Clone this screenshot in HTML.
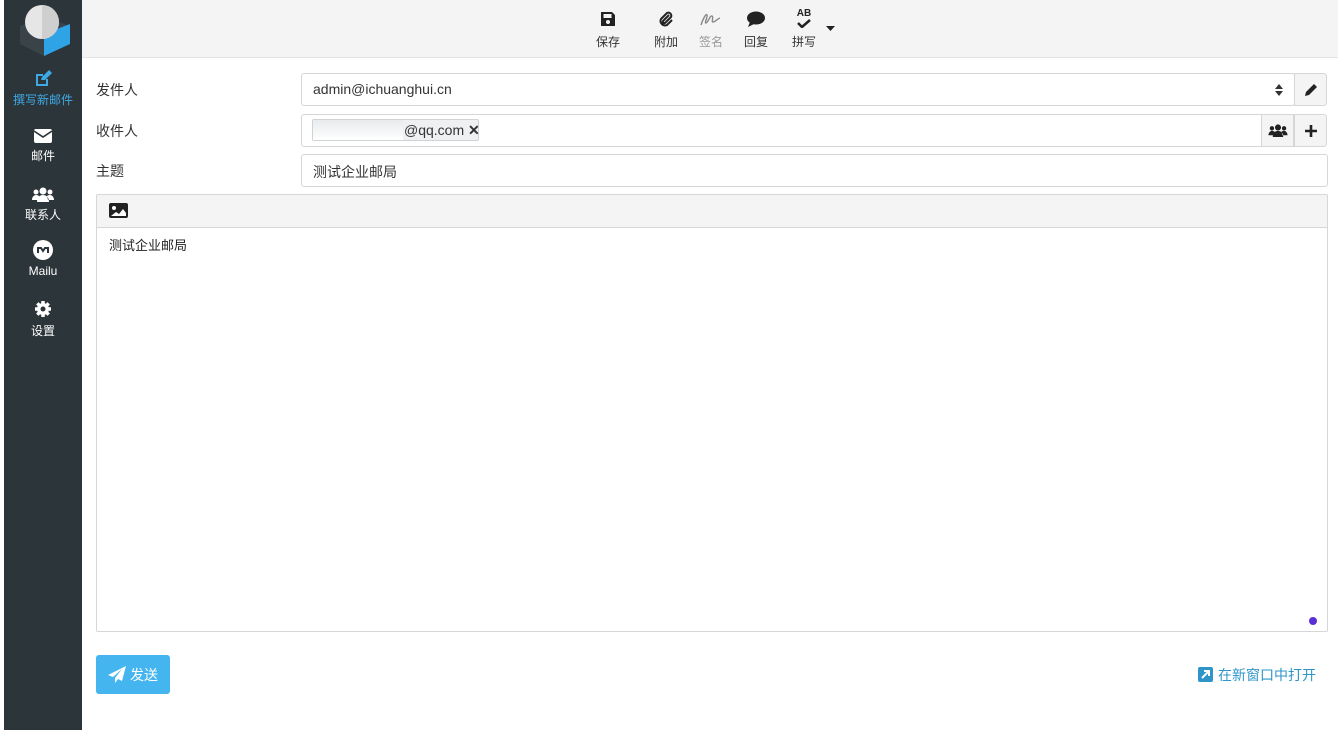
<!DOCTYPE html>
<html><head><meta charset="utf-8"><style>
*{box-sizing:border-box;margin:0;padding:0}
body{width:1338px;height:730px;background:#fff;font-family:"Liberation Sans","Noto Sans CJK SC",sans-serif;font-size:14px;color:#333;position:relative;overflow:hidden}
.abs{position:absolute}
#side{left:4px;top:0;width:78px;height:730px;background:#2c3539}
.nav{position:absolute;left:0;width:78px;text-align:center;color:#fff;font-size:12px}
.nav svg{display:block;margin:0 auto 4px}
#top{left:82px;top:0;width:1256px;height:58px;background:#f4f4f4;border-bottom:1px solid #e3e3e3}
.tb{position:absolute;top:11px;text-align:center;font-size:12px;color:#333}
.tb svg{display:block;margin:0 auto 6px}
.lbl{position:absolute;left:96px;font-size:14px;color:#333}
.inp{position:absolute;left:301px;width:1027px;height:33px;border:1px solid #d6d6d6;border-radius:3px;font-size:14px;padding:7px 11px}
.btnr{position:absolute;width:33px;height:33px;border:1px solid #d6d6d6;background:#f4f4f4;display:flex;align-items:center;justify-content:center}
</style></head><body>
<div id="side" class="abs">
  <svg class="abs" style="left:12px;top:4px" width="56" height="52" viewBox="0 0 56 52">
    <polygon points="4,22 28,12 54,22 54,40 28,52 4,40" fill="#3a4348"/>
    <polygon points="28,30 54,20 54,40 28,52" fill="#2ea3e6"/>
    <circle cx="26" cy="18" r="17" fill="#e6e6e6"/>
    <path d="M26 1 A17 17 0 0 1 26 35 Z" fill="#cfcfcf"/>
  </svg>
  <div class="nav" style="top:70px;color:#3fa9e6">
    <svg width="18" height="17" viewBox="0 0 18 17"><path d="M2 4h7v2H4v8h8V9h2v7H2z" fill="#3fa9e6"/><path d="M7 10l1-3 7-7 3 3-7 7z" fill="#3fa9e6"/></svg>撰写新邮件</div>
  <div class="nav" style="top:129px"><svg width="18" height="14" viewBox="0 0 18 14"><rect x="0" y="0" width="18" height="14" rx="2" fill="#fff"/><path d="M0 2l9 6 9-6" stroke="#2c3539" stroke-width="1.6" fill="none"/></svg>邮件</div>
  <div class="nav" style="top:187px"><svg width="22" height="15" viewBox="0 0 22 15"><circle cx="11" cy="4" r="3.5" fill="#fff"/><circle cx="4" cy="5" r="2.5" fill="#fff"/><circle cx="18" cy="5" r="2.5" fill="#fff"/><path d="M5 15c0-5 3-7 6-7s6 2 6 7z M0 13c0-3 2-5 4-5s3 1 3 1L6 13z M22 13c0-3-2-5-4-5s-3 1-3 1l1 4z" fill="#fff"/></svg>联系人</div>
  <div class="nav" style="top:240px"><svg width="20" height="20" viewBox="0 0 20 20"><circle cx="10" cy="10" r="10" fill="#fff"/><path d="M5 13V8h3l2 3 2-3h3v5" stroke="#2c3539" stroke-width="2" fill="none"/></svg>Mailu</div>
  <div class="nav" style="top:300px"><svg width="18" height="18" viewBox="0 0 18 18"><circle cx="9" cy="9" r="6" fill="#fff"/><g stroke="#fff" stroke-width="3.5"><path d="M9 1v16M1 9h16M3.3 3.3l11.4 11.4M14.7 3.3L3.3 14.7"/></g><circle cx="9" cy="9" r="2.5" fill="#2c3539"/></svg>设置</div>
</div>
<div id="top" class="abs"></div>
<div class="tb" style="left:594px;width:28px"><svg width="16" height="16" viewBox="0 0 16 16"><path d="M1 1h11l3 3v11H1z" fill="#222"/><rect x="3.5" y="3" width="8" height="4" fill="#f4f4f4"/><circle cx="8" cy="11" r="2" fill="#f4f4f4"/></svg>保存</div>
<div class="tb" style="left:652px;width:28px"><svg width="16" height="16" viewBox="0 0 16 16"><path d="M11 4L5 10a1.5 1.5 0 0 0 2 2l6-6a3 3 0 0 0-4-4L3 8a4.5 4.5 0 0 0 6 6l5-5" stroke="#222" stroke-width="2" fill="none"/></svg>附加</div>
<div class="tb" style="left:697px;width:28px;color:#999"><svg width="24" height="16" viewBox="0 0 24 16"><path d="M2 14c2-6 5-12 6-10s-3 8-1 8 4-8 6-7-1 6 1 6 4-3 7-4" stroke="#888" stroke-width="1.4" fill="none"/></svg>签名</div>
<div class="tb" style="left:742px;width:28px"><svg width="18" height="16" viewBox="0 0 18 16"><ellipse cx="9" cy="7" rx="9" ry="6.5" fill="#222"/><path d="M3 11l-2 5 6-3z" fill="#222"/></svg>回复</div>
<div class="tb" style="left:790px;width:28px;top:9px"><div style="font-size:10px;font-weight:bold;line-height:10px;color:#222">AB</div><svg width="14" height="9" viewBox="0 0 14 9" style="margin-bottom:5px"><path d="M1 4l4 4 8-7" stroke="#222" stroke-width="2.5" fill="none"/></svg>拼写</div>
<svg class="abs" style="left:826px;top:26px" width="9" height="5"><path d="M0 0h9L4.5 5z" fill="#222"/></svg>

<div class="lbl" style="top:80px">发件人</div>
<div class="lbl" style="top:121px">收件人</div>
<div class="lbl" style="top:161px">主题</div>
<div class="inp" style="top:73px;width:994px">admin@ichuanghui.cn</div>
<svg class="abs" style="left:1275px;top:84px" width="8" height="12"><path d="M0 5L4 0 8 5zM0 7l4 5 4-5z" fill="#333"/></svg>
<div class="btnr" style="left:1294px;top:73px;border-radius:0 3px 3px 0"><svg width="14" height="14" viewBox="0 0 14 14"><path d="M1 13l1-4 8-8 3 3-8 8z" fill="#222"/></svg></div>
<div class="inp" style="top:114px;width:962px"></div>
<div class="abs" style="left:312px;top:119px;width:167px;height:22px;background:#eef0f1;border:1px solid #d0d3d5;border-radius:2px;font-size:14px;padding:2px 0 0 91px;white-space:nowrap">@qq.com <b>✕</b></div>
<div class="abs" style="left:313px;top:120px;width:90px;height:20px;background:linear-gradient(#e8eaec,#fff)"></div>
<div class="btnr" style="left:1261px;top:114px"><svg width="20" height="13" viewBox="0 0 22 15"><circle cx="11" cy="4" r="3.5" fill="#222"/><circle cx="4" cy="5" r="2.5" fill="#222"/><circle cx="18" cy="5" r="2.5" fill="#222"/><path d="M5 15c0-5 3-7 6-7s6 2 6 7zM0 13c0-3 2-5 4-5s3 1 3 1L6 13zM22 13c0-3-2-5-4-5s-3 1-3 1l1 4z" fill="#222"/></svg></div>
<div class="btnr" style="left:1294px;top:114px;border-radius:0 3px 3px 0"><svg width="14" height="14"><path d="M7 1v12M1 7h12" stroke="#222" stroke-width="2.6"/></svg></div>
<div class="inp" style="top:154px">测试企业邮局</div>

<div class="abs" style="left:96px;top:194px;width:1232px;height:438px;border:1px solid #d6d6d6;border-radius:2px">
  <div style="height:33px;background:#f4f4f4;border-bottom:1px solid #d6d6d6;position:relative">
    <svg class="abs" style="left:12px;top:8px" width="19" height="15" viewBox="0 0 19 15"><rect width="19" height="15" rx="2" fill="#222"/><circle cx="5" cy="5" r="2" fill="#fff"/><path d="M2 13l5-4 3 2 4-5 3 4v3z" fill="#fff"/></svg>
  </div>
  <div style="font-size:13px;padding:7px 12px;color:#222">测试企业邮局</div>
  <div class="abs" style="right:10px;bottom:6px;width:8px;height:8px;border-radius:50%;background:#5b2fd6"></div>
</div>

<div class="abs" style="left:96px;top:655px;width:74px;height:39px;background:#44b5ee;border-radius:3px;color:#fff;font-size:14px;padding:10px 0 0 12px"><svg width="18" height="17" viewBox="0 0 18 17" style="vertical-align:-3px;margin-right:4px"><path d="M18 0L0 9l5 2 9-8-7 9v5l3-4 4 2z" fill="#fff"/></svg>发送</div>
<div class="abs" style="left:1198px;top:665px;font-size:14px;color:#2e95c9"><svg width="15" height="15" viewBox="0 0 15 15" style="vertical-align:-2px;margin-right:5px"><rect width="15" height="15" rx="2" fill="#2e95c9"/><path d="M4 11l6-6M6 4h5v5" stroke="#fff" stroke-width="2" fill="none"/></svg>在新窗口中打开</div>
</body></html>
